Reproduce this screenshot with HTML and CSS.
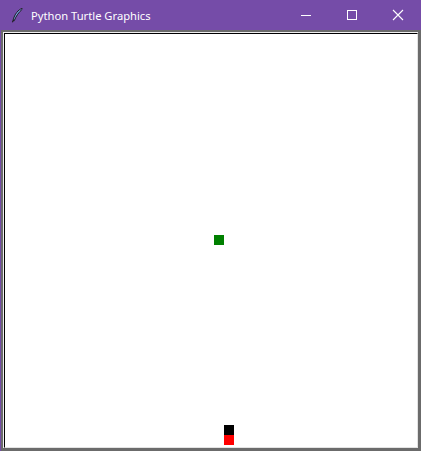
FILE: index.html
```html
<!DOCTYPE html>
<html>
<head>
<meta charset="utf-8">
<link rel="stylesheet" href="styles.css">
</head>
<body>
<div class="window">
  <div class="titlebar">
    <svg class="appicon" width="16" height="16" viewBox="0 0 16 16">
      <path d="M13 1.5 C9.5 2.5 5.5 7 4 13.5 L5.2 13.8 C7 9 10 5 13.5 2 Z" fill="#7aa8ee" stroke="#1c1c1c" stroke-width="1"/>
      <path d="M4.2 13.5 L3.4 15.2" stroke="#1c1c1c" stroke-width="1.1"/>
    </svg>
    <span class="title">Python Turtle Graphics</span>
    <div class="controls">
      <div class="ctl"><svg width="12" height="12" viewBox="0 0 12 12"><path d="M1 6.5 H11" stroke="#fff" stroke-width="1"/></svg></div>
      <div class="ctl"><svg width="12" height="12" viewBox="0 0 12 12"><rect x="1.5" y="1.5" width="9" height="9" fill="none" stroke="#fff" stroke-width="1"/></svg></div>
      <div class="ctl"><svg width="12" height="12" viewBox="0 0 12 12"><path d="M1 1 L11 11 M11 1 L1 11" stroke="#fff" stroke-width="1.1"/></svg></div>
    </div>
  </div>
  <div class="frame">
    <div class="inner">
      <div class="canvas">
        <div class="sq green"></div>
        <div class="sq black"></div>
        <div class="sq red"></div>
      </div>
    </div>
  </div>
</div>
</body>
</html>
```
FILE: styles.css
```css
html, body { margin: 0; padding: 0; }
body { width: 421px; height: 451px; overflow: hidden; background: #fff; font-family: "Noto Sans", "Open Sans", sans-serif; }
.window { display: flex; flex-direction: column; height: 451px; }
.titlebar { height: 30px; background: #754ca8; display: flex; align-items: center; color: #fff; flex: none; }
.appicon { margin-left: 9px; width: 16px; height: 16px; }
.title { margin-left: 6px; font-size: 11.2px; letter-spacing: 0; }
.controls { margin-left: auto; display: flex; height: 30px; }
.ctl { width: 46px; display: flex; align-items: center; justify-content: center; }
.frame { flex: 1; display: flex; border-left: 1px solid #754ca8; background: #6b6b6b; padding: 2px 3px 3px 2px; }
.inner { flex: 1; display: flex; border-top: 1px solid #f0f0f0; border-left: 1px solid #f0f0f0; }
.canvas { flex: 1; position: relative; background: #fff; border-top: 1px solid #000; border-left: 1px solid #000; border-right: 1px solid #e3e3e3; border-bottom: 1px solid #e3e3e3; }
.sq { position: absolute; width: 10px; height: 10px; }
.green { background: #008000; left: 209px; top: 201px; }
.black { background: #000; left: 219px; top: 391px; }
.red { background: #ff0000; left: 219px; top: 401px; }
```
